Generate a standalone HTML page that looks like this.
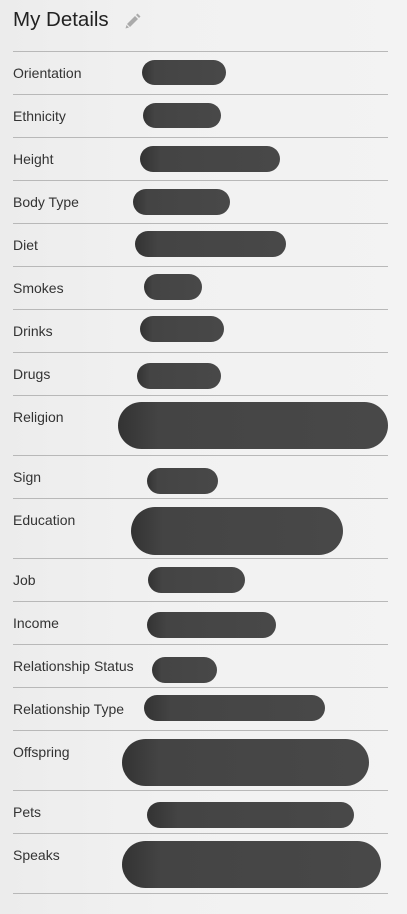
<!DOCTYPE html>
<html><head><style>
body{margin:0;width:407px;height:914px;background:linear-gradient(90deg,#ececec 0%,#f1f1f1 40%,#f3f3f3 100%);font-family:"Liberation Sans",sans-serif;position:relative;overflow:hidden}
.t{position:absolute;left:13px;top:8px;font-size:20.5px;color:#222;}
.l{position:absolute;left:13px;width:375px;height:1px;background:#b8b8b8}
.k{position:absolute;left:13px;font-size:14px;color:#333;}
.b{position:absolute;background:linear-gradient(90deg,#333 0%,#444 15%,#484848 100%);border-radius:30px}
</style></head><body>
<div class="t">My Details</div>
<svg style="position:absolute;left:124px;top:12px" width="18" height="18" viewBox="0 0 18 18"><path d="M3 12 L11 4 L14 7 L6 15 Z" fill="#aaa"/><path d="M12 3 L13.5 1.5 L16.5 4.5 L15 6 Z" fill="#aaa"/><path d="M2.5 13 L5 15.5 L1.5 16.5 Z" fill="#aaa"/></svg>
<div class="l" style="top:51px"></div>
<div class="l" style="top:94px"></div>
<div class="l" style="top:137px"></div>
<div class="l" style="top:180px"></div>
<div class="l" style="top:223px"></div>
<div class="l" style="top:266px"></div>
<div class="l" style="top:309px"></div>
<div class="l" style="top:352px"></div>
<div class="l" style="top:395px"></div>
<div class="l" style="top:455px"></div>
<div class="l" style="top:498px"></div>
<div class="l" style="top:558px"></div>
<div class="l" style="top:601px"></div>
<div class="l" style="top:644px"></div>
<div class="l" style="top:687px"></div>
<div class="l" style="top:730px"></div>
<div class="l" style="top:790px"></div>
<div class="l" style="top:833px"></div>
<div class="l" style="top:893px"></div>
<div class="k" style="top:65px">Orientation</div>
<div class="k" style="top:108px">Ethnicity</div>
<div class="k" style="top:151px">Height</div>
<div class="k" style="top:194px">Body Type</div>
<div class="k" style="top:237px">Diet</div>
<div class="k" style="top:280px">Smokes</div>
<div class="k" style="top:323px">Drinks</div>
<div class="k" style="top:366px">Drugs</div>
<div class="k" style="top:409px">Religion</div>
<div class="k" style="top:469px">Sign</div>
<div class="k" style="top:512px">Education</div>
<div class="k" style="top:572px">Job</div>
<div class="k" style="top:615px">Income</div>
<div class="k" style="top:658px">Relationship Status</div>
<div class="k" style="top:701px">Relationship Type</div>
<div class="k" style="top:744px">Offspring</div>
<div class="k" style="top:804px">Pets</div>
<div class="k" style="top:847px">Speaks</div>
<div class="b" style="left:142px;top:60px;width:84px;height:25px"></div>
<div class="b" style="left:143px;top:103px;width:78px;height:25px"></div>
<div class="b" style="left:140px;top:146px;width:140px;height:26px"></div>
<div class="b" style="left:133px;top:189px;width:97px;height:26px"></div>
<div class="b" style="left:135px;top:231px;width:151px;height:26px"></div>
<div class="b" style="left:144px;top:274px;width:58px;height:26px"></div>
<div class="b" style="left:140px;top:316px;width:84px;height:26px"></div>
<div class="b" style="left:137px;top:363px;width:84px;height:26px"></div>
<div class="b" style="left:118px;top:402px;width:270px;height:47px"></div>
<div class="b" style="left:147px;top:468px;width:71px;height:26px"></div>
<div class="b" style="left:131px;top:507px;width:212px;height:48px"></div>
<div class="b" style="left:148px;top:567px;width:97px;height:26px"></div>
<div class="b" style="left:147px;top:612px;width:129px;height:26px"></div>
<div class="b" style="left:152px;top:657px;width:65px;height:26px"></div>
<div class="b" style="left:144px;top:695px;width:181px;height:26px"></div>
<div class="b" style="left:122px;top:739px;width:247px;height:47px"></div>
<div class="b" style="left:147px;top:802px;width:207px;height:26px"></div>
<div class="b" style="left:122px;top:841px;width:259px;height:47px"></div>
</body></html>
